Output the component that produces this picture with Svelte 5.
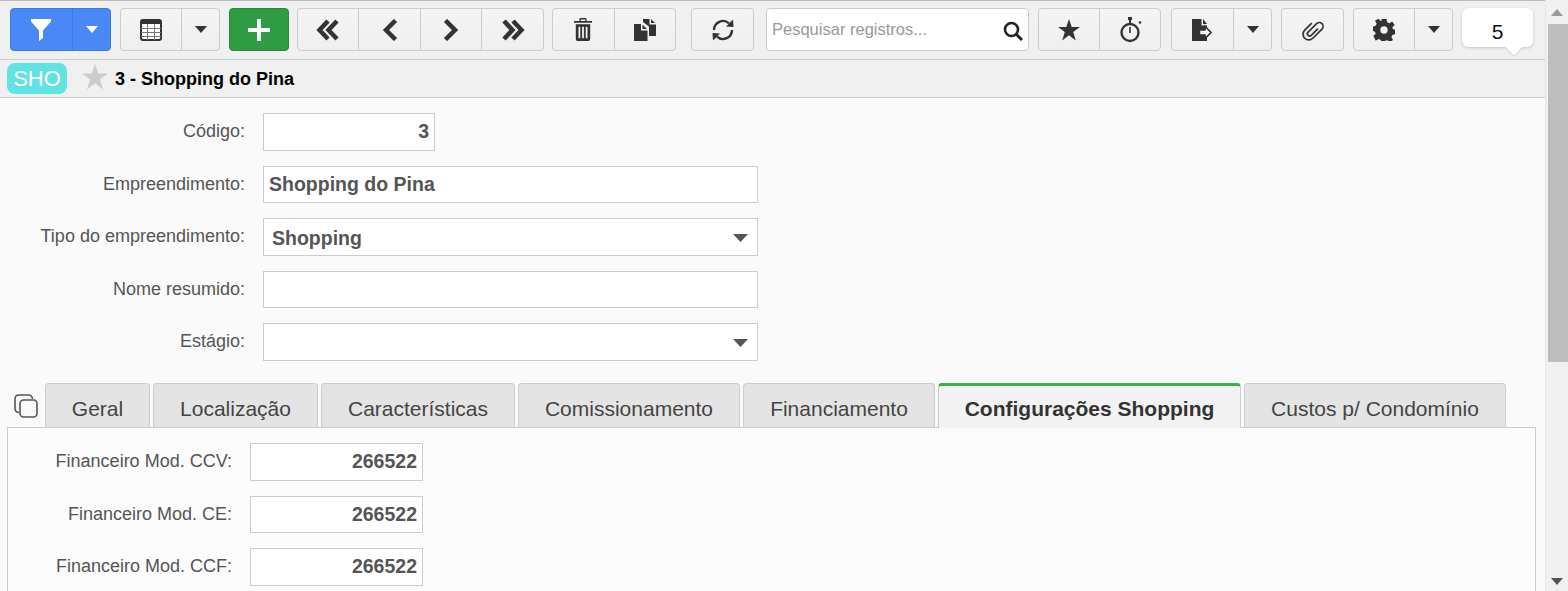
<script>
	// toolbar groups, left to right. gap = space before the group, w = segment widths
	const toolbar = [
		{ gap: 10, tone: "blue", items: [{ w: 62, icon: "funnel" }, { w: 39, icon: "caret" }] },
		{ gap: 9, items: [{ w: 61, icon: "table" }, { w: 39, icon: "caret" }] },
		{ gap: 9, tone: "green", items: [{ w: 60, icon: "plus" }] },
		{ gap: 8, items: [
			{ w: 61, icon: "first" },
			{ w: 62, icon: "prev" },
			{ w: 61, icon: "next" },
			{ w: 63, icon: "last" },
		] },
		{ gap: 8, items: [{ w: 62, icon: "trash" }, { w: 62, icon: "copy" }] },
		{ gap: 15, items: [{ w: 63, icon: "refresh" }] },
		{ gap: 12, search: true, w: 263 },
		{ gap: 9, items: [{ w: 61, icon: "star" }, { w: 62, icon: "watch" }] },
		{ gap: 10, items: [{ w: 62, icon: "export" }, { w: 39, icon: "caret" }] },
		{ gap: 9, items: [{ w: 63, icon: "clip" }] },
		{ gap: 9, items: [{ w: 61, icon: "cog" }, { w: 39, icon: "caret" }] },
	];

	const fields = [
		{ label: "Código:", value: "3", kind: "num" },
		{ label: "Empreendimento:", value: "Shopping do Pina" },
		{ label: "Tipo do empreendimento:", value: "Shopping", kind: "select" },
		{ label: "Nome resumido:", value: "" },
		{ label: "Estágio:", value: "", kind: "select" },
	];

	const tabs = [
		{ name: "Geral", w: 105 },
		{ name: "Localização", w: 165 },
		{ name: "Características", w: 194 },
		{ name: "Comissionamento", w: 222 },
		{ name: "Financiamento", w: 192 },
		{ name: "Configurações Shopping", w: 303, active: true },
		{ name: "Custos p/ Condomínio", w: 262 },
	];

	const modFields = [
		{ label: "Financeiro Mod. CCV:", value: "266522" },
		{ label: "Financeiro Mod. CE:", value: "266522" },
		{ label: "Financeiro Mod. CCF:", value: "266522" },
	];
</script>

{#snippet icon(name)}
	{#if name === "caret"}
		<svg class="ic" width="12" height="7" viewBox="0 0 12 7"><path d="M0 0h12L6 7z" /></svg>
	{:else if name === "funnel"}
		<svg class="ic" width="20" height="22" viewBox="0 0 20 22"><path d="M0 0h20v2.500L12 11.500v7.500l-4 3V11.500L0 2.500z" /></svg>
	{:else if name === "table"}
		<svg class="ic" width="22" height="22" viewBox="0 0 22 22">
			<rect x="1" y="1" width="20" height="20" rx="2" fill="#fff" stroke="#333" stroke-width="2" />
			<rect x="1" y="1" width="20" height="4" rx="1" />
			<path d="M1 9.500h20M1 13.500h20M1 17.500h20M7.500 5v16M14.500 5v16" fill="none" stroke="#777" />
		</svg>
	{:else if name === "plus"}
		<svg class="ic" width="22" height="22" viewBox="0 0 22 22"><path d="M9 0h4v9h9v4h-9v9H9v-9H0V9h9z" /></svg>
	{:else if name === "first"}
		<svg class="line" width="24" height="22" viewBox="0 0 24 22"><path d="M12 2 3.500 11l8.500 9M21 2l-8.500 9 8.500 9" /></svg>
	{:else if name === "prev"}
		<svg class="line" width="16" height="22" viewBox="0 0 16 22"><path d="M13.500 1.500 4 11l9.500 9.500" /></svg>
	{:else if name === "next"}
		<svg class="line" width="16" height="22" viewBox="0 0 16 22"><path d="M2.500 1.500 12 11l-9.500 9.500" /></svg>
	{:else if name === "last"}
		<svg class="line" width="24" height="22" viewBox="0 0 24 22"><path d="M3 2l8.500 9L3 20M12 2l8.500 9-8.500 9" /></svg>
	{:else if name === "trash"}
		<svg class="ic" width="18" height="23" viewBox="0 0 20 24" preserveAspectRatio="none">
			<path d="M6 3V1.500Q6 0 7.500 0h5Q14 0 14 1.500V3h6v2H0V3zM7.500 1.500V3h5V1.500z" />
			<path d="M2 6.500h16V22q0 2-2 2H4q-2 0-2-2zM5 9v12h2V9zm4 0v12h2V9zm4 0v12h2V9z" fill-rule="evenodd" />
		</svg>
	{:else if name === "copy"}
		<svg class="ic shift" width="22" height="22" viewBox="0 0 22 22">
			<path d="M9 0h6.500v5.500H22V17h-7V7.500L9 3z" />
			<path d="M17 0v4h4zM0 5h7v6.500h6.500V22H0zM8.500 5.500v4.500H13z" />
		</svg>
	{:else if name === "refresh"}
		<svg class="ic" width="22" height="22" viewBox="0 0 22 22">
			<path d="M2 11A9 9 0 0 1 17 4.300" fill="none" stroke="#333" stroke-width="2.400" />
			<path d="M20 11A9 9 0 0 1 5 17.700" fill="none" stroke="#333" stroke-width="2.400" />
			<path d="M14 7.500 21.500 8 21 .5zM8 14.500.5 14 1 21.500z" />
		</svg>
	{:else if name === "star"}
		<svg class="ic" width="22" height="22" viewBox="0 0 22 22"><path d="M11 0l2.700 8H22l-6.800 5 2.600 8.500L11 16.300 4.200 21.500 6.800 13 0 8h8.300z" /></svg>
	{:else if name === "watch"}
		<svg class="ic" width="22" height="26" viewBox="0 0 22 26">
			<circle cx="10" cy="15.500" r="8.500" fill="none" stroke="#333" stroke-width="2.400" />
			<path d="M8 0h4v3H8zM9 3h2v3H9zM9.200 10h1.600v6H9.200z" />
			<circle cx="20" cy="5.500" r="1.300" />
		</svg>
	{:else if name === "export"}
		<svg class="ic" width="20" height="22" viewBox="0 0 20 22">
			<path d="M0 0h9.500v6.500H15V22H0z" />
			<path d="M11 0l4 5h-4z" />
			<path d="M7.500 11H13V7.500l6 6-6 6V16H7.500z" fill="#fff" stroke="#333" stroke-width="1.600" />
		</svg>
	{:else if name === "clip"}
		<svg class="line thin" width="24" height="24" viewBox="0 0 24 24">
			<path d="M14.500 7.500V17a2.200 2.200 0 0 1-4.400 0V5a3.800 3.800 0 0 1 7.600 0v13a5.700 5.700 0 0 1-11.400 0V8" transform="translate(12 12) rotate(45) translate(-12 -12)" />
		</svg>
	{:else if name === "cog"}
		<svg class="ic" width="22" height="22" viewBox="0 0 22 22">
			<path fill-rule="evenodd" d="M8.500 0h5l.7 3.200 2.200 1 2.800-1.700 2.500 3.500-2.300 2.200.4 1.800 2.200.8v4.400l-2.700.8-.9 2.200 1.600 2.800-3.500 2.500-2.200-2.300-1.800.4-.8 2.400H8.500l-.7-3-2.200-.9-2.800 1.700L.3 17l2.300-2.200-.6-2.100-2-.7V7.500l2.700-.8.900-2.200-1.600-2.700L5.500-.3 7.700 2l.8-.3zM11 7.300a3.700 3.700 0 1 0 0 7.400 3.700 3.700 0 0 0 0-7.400z" />
		</svg>
	{/if}
{/snippet}

{#snippet field(f)}
	<div class="row">
		<span class="label">{f.label}</span>
		<div class="input" class:num={f.kind === "num"} class:select={f.kind === "select"}>
			<span>{f.value}</span>
			{#if f.kind === "select"}
				<svg width="15" height="8" viewBox="0 0 15 8"><path d="M0 0h15L7.500 8z" /></svg>
			{/if}
		</div>
	</div>
{/snippet}

<div class="page">
	<div class="content">
		<div class="toolbar">
			{#each toolbar as group}
				{#if group.search}
					<div class="search" style="margin-left: {group.gap}px; width: {group.w}px">
						<span class="placeholder">Pesquisar registros...</span>
						<svg width="20" height="20" viewBox="0 0 20 20" fill="none" stroke="#222">
							<circle cx="8.500" cy="8.500" r="6.500" stroke-width="2.600" />
							<path d="m13 13 6 6" stroke-width="3" />
						</svg>
					</div>
				{:else}
					<div class="group {group.tone ?? ''}" style="margin-left: {group.gap}px">
						{#each group.items as item}
							<button style="width: {item.w}px">{@render icon(item.icon)}</button>
						{/each}
					</div>
				{/if}
			{/each}
			<div class="bubble">5</div>
		</div>

		<div class="titlebar">
			<span class="badge">SHO</span>
			<svg class="fav" width="28" height="26" viewBox="0 0 22 22"><path d="M11 0l2.700 8H22l-6.800 5 2.600 8.500L11 16.300 4.200 21.500 6.800 13 0 8h8.300z" /></svg>
			<span class="title">3 - Shopping do Pina</span>
		</div>

		<div class="form">
			{#each fields as f}
				{@render field(f)}
			{/each}
		</div>

		<div class="tabbar">
			<svg class="tabs-icon" width="24" height="24" viewBox="0 0 24 24" fill="none" stroke="#555" stroke-width="1.600">
				<rect x="6" y="6" width="17" height="17" rx="3.500" />
				<path d="M5 18.500Q1 18 1 14.500V5q0-4 4-4h9.500Q18 1 18.500 5" />
			</svg>
			{#each tabs as tab}
				<div class="tab" class:active={tab.active} style="width: {tab.w}px">{tab.name}</div>
			{/each}
		</div>

		<div class="panel">
			{#each modFields as f}
				<div class="row">
					<span class="label">{f.label}</span>
					<div class="input num"><span>{f.value}</span></div>
				</div>
			{/each}
		</div>
	</div>

	<div class="scrollbar">
		<svg width="12" height="7" viewBox="0 0 12 7"><path d="M0 7h12L6 0z" /></svg>
		<div class="thumb"></div>
		<svg class="down" width="12" height="7" viewBox="0 0 12 7"><path d="M0 0h12L6 7z" /></svg>
	</div>
</div>

<style>
	:global(body) {
		overflow: hidden;
		font-family: "Liberation Sans", Arial, sans-serif;
		background: #fafafa;
	}
	.page {
		display: flex;
		height: 591px;
		overflow: hidden;
	}
	.content {
		width: 1545px;
		flex: none;
		overflow: hidden;
	}

	.toolbar {
		display: flex;
		align-items: flex-start;
		height: 59px;
		padding-top: 7px;
		box-sizing: border-box;
		background: #f0f0f0;
		border-top: 1px solid #bbb;
	}
	.group {
		display: flex;
		height: 43px;
		box-sizing: border-box;
		border: 1px solid #ccc;
		border-radius: 4px;
		background: linear-gradient(#f4f4f4, #efefef);
	}
	.group button {
		display: flex;
		align-items: center;
		justify-content: center;
		padding: 0;
		background: none;
		border: 0;
		border-left: 1px solid #ccc;
		box-sizing: border-box;
	}
	.group button:first-child {
		border-left: 0;
		margin-left: -1px;
	}
	.group button:last-child {
		margin-right: -1px;
	}
	.ic {
		fill: #333;
	}
	.ic.shift {
		margin-left: -2px;
	}
	.line {
		fill: none;
		stroke: #333;
		stroke-width: 4.500;
	}
	.line.thin {
		stroke-width: 1.700;
	}
	.group.blue {
		border-color: #3a7be8;
		background: #4a89f5;
	}
	.blue button {
		border-color: #3a7be8;
	}
	.blue .ic,
	.green .ic {
		fill: #fff;
	}
	.group.green {
		border-color: #2a8a3a;
		background: #2f9b42;
	}

	.search {
		display: flex;
		align-items: center;
		justify-content: space-between;
		height: 43px;
		box-sizing: border-box;
		padding: 0 5px 0 5px;
		background: #fff;
		border: 1px solid #ccc;
		border-radius: 4px;
	}
	.placeholder {
		font-size: 16.500px;
		color: #999;
	}
	.search svg {
		margin-top: 3px;
	}

	.bubble {
		position: relative;
		z-index: 2;
		margin-left: 9px;
		width: 71px;
		height: 39px;
		box-sizing: border-box;
		padding-top: 12px;
		text-align: center;
		font-size: 21px;
		color: #111;
		background: #fff;
		border-radius: 6px;
		box-shadow: 0 1px 3px rgba(0, 0, 0, 0.18);
	}
	.bubble::after {
		content: "";
		position: absolute;
		left: 46px;
		bottom: -6px;
		width: 12px;
		height: 12px;
		background: #fff;
		transform: rotate(45deg);
		box-shadow: 1px 1px 1px rgba(0, 0, 0, 0.1);
	}

	.titlebar {
		display: flex;
		align-items: center;
		height: 39px;
		box-sizing: border-box;
		padding-left: 7px;
		background: #f0f0f0;
		border-top: 1px solid #ccc;
		border-bottom: 1px solid #ccc;
	}
	.badge {
		width: 60px;
		height: 31px;
		line-height: 31px;
		text-align: center;
		font-size: 22px;
		color: #fff;
		background: #5fe3e3;
		border-radius: 8px;
	}
	.fav {
		margin-left: 14px;
		margin-top: -4px;
		fill: #ccc;
	}
	.title {
		margin-left: 6px;
		margin-top: 2px;
		font-size: 18px;
		font-weight: bold;
		color: #000;
	}

	.form {
		display: flex;
		flex-direction: column;
		gap: 15px;
		padding-top: 15px;
		height: 285px;
		box-sizing: border-box;
	}
	.row {
		display: flex;
		align-items: center;
	}
	.label {
		width: 245px;
		margin-right: 18px;
		text-align: right;
		font-size: 18px;
		color: #555;
	}
	.input {
		display: flex;
		align-items: center;
		justify-content: space-between;
		width: 495px;
		height: 37.500px;
		box-sizing: border-box;
		padding: 0 5px;
		background: #fff;
		border: 1px solid #ccc;
		font-size: 19.500px;
		font-weight: bold;
		color: #555;
	}
	.input.num {
		width: 172px;
		justify-content: flex-end;
	}
	.input.select {
		padding: 0 9px 0 8px;
	}
	.input.select span {
		margin-top: 3px;
	}
	.input.select svg {
		fill: #555;
		margin-top: 2px;
	}

	.tabbar {
		display: flex;
		align-items: flex-end;
		height: 44px;
		padding-left: 14px;
		gap: 3px;
		position: relative;
		z-index: 1;
	}
	.tabs-icon {
		align-self: center;
		margin-right: 4px;
		margin-top: 1px;
	}
	.tab {
		height: 44px;
		box-sizing: border-box;
		padding-top: 13px;
		text-align: center;
		font-size: 21px;
		color: #444;
		background: #e4e4e4;
		border: 1px solid #ccc;
		border-bottom: 0;
		border-radius: 4px 4px 0 0;
	}
	.tab.active {
		height: 45px;
		margin-bottom: -1px;
		padding-top: 11px;
		font-weight: bold;
		color: #333;
		background: #f2f2f2;
		border-top: 3px solid #38b04a;
	}

	.panel {
		display: flex;
		flex-direction: column;
		gap: 15px;
		width: 1529px;
		height: 200px;
		margin-left: 7px;
		padding-top: 15px;
		box-sizing: border-box;
		background: #fcfcfc;
		border: 1px solid #ccc;
		border-bottom: 0;
	}
	.panel .label {
		width: 224px;
		margin-right: 18px;
	}
	.panel .input {
		width: 173px;
	}

	.scrollbar {
		position: relative;
		flex: 1;
		background: #f1f1f1;
		padding-left: 2px;
		border-left: 1px solid #e6e6e6;
	}
	.scrollbar svg {
		position: absolute;
		left: 5px;
		top: 9px;
		fill: #999;
	}
	.scrollbar svg.down {
		top: auto;
		bottom: 6px;
		fill: #555;
	}
	.thumb {
		margin-top: 24px;
		height: 338px;
		background: #bdbdbd;
	}
</style>
